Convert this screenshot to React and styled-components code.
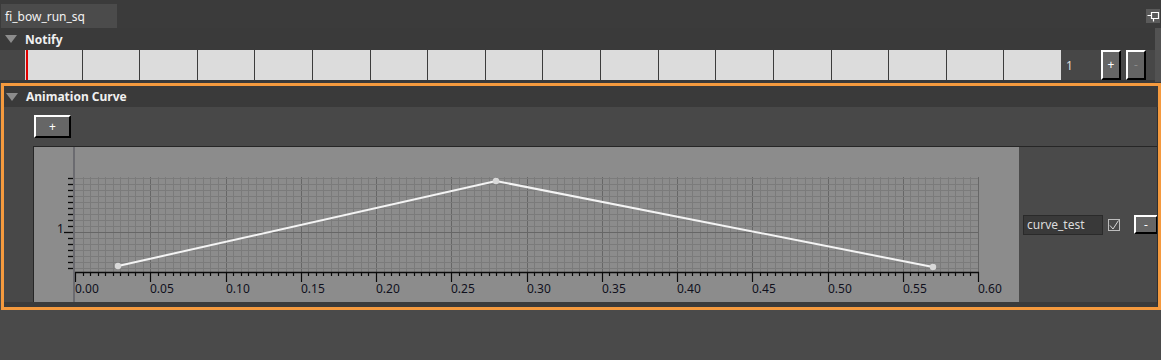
import React from 'react';
import styled, { createGlobalStyle } from 'styled-components';

const GlobalStyle = createGlobalStyle`
    body {
        margin:0;
        background:#4a4a4a;
        font-family:"Noto Sans", "Open Sans", sans-serif;
        font-size:12px;
        color:#e8e8e8;
    }
`

const Page = styled.div`
    width:1161px;
    height:360px;
    overflow:hidden;
    background:#4a4a4a;
`
const TabBar = styled.div`
    height:28px;
    display:flex;
    justify-content:space-between;
    background:#3b3b3b;
`
const Tab = styled.div`
    height:24px;
    margin:4px 0 0 1px;
    padding:0 32px 0 4px;
    display:flex;
    align-items:center;
    background:#4b4b4b;
    color:#f2f2f2;
`
const PinButton = styled.div`
    width:14px;
    height:14px;
    margin:9px 1px 0 0;
    background:#5a5a5a;
    display:flex;
    align-items:center;
    justify-content:center;
`
const NotifySection = styled.div`
    display:flex;
    background:#3a3a3a;
`
const NotifyMain = styled.div`
    flex:1;
    padding-bottom:3px;
`
const ScrollStrip = styled.div`
    width:6px;
    margin-bottom:1px;
    background:#525252;
`
const SectionHeader = styled.div`
    height:${p => p.h}px;
    display:flex;
    align-items:center;
    gap:8px;
    padding-left:${p => p.indent}px;
    background:#3a3a3a;
    font-weight:bold;
    color:#f0f0f0;
`
const Arrow = styled.span`
    width:0;
    height:0;
    border-left:6px solid transparent;
    border-right:6px solid transparent;
    border-top:8px solid #8c8c8c;
`
const NotifyRow = styled.div`
    height:30px;
    display:flex;
    align-items:stretch;
    background:#474747;
`
const Track = styled.div`
    position:relative;
    width:1036px;
    margin-left:25px;
    display:flex;
    background:#dcdcdc;
`
const Playhead = styled.div`
    position:absolute;
    left:1px;
    top:0;
    bottom:0;
    width:2px;
    background:#e00000;
`
const Cell = styled.div`
    flex:1;
    border-left:${p => (p.first ? 'none' : '1px solid #3c3c3c')};
`
const Count = styled.div`
    width:40px;
    padding-left:5px;
    box-sizing:border-box;
    display:flex;
    align-items:center;
    color:#dedede;
`
const BevelButton = styled.button`
    width:${p => p.w}px;
    height:${p => p.h}px;
    padding:0;
    margin-left:${p => p.ml || 0}px;
    flex-shrink:0;
    border-style:solid;
    border-width:2px;
    border-color:#ffffff #000000 #000000 #ffffff;
    background:${p => (p.disabled ? '#646464' : '#666666')};
    color:${p => (p.disabled ? '#8a8a8a' : '#ffffff')};
    font-family:"Noto Sans", sans-serif;
    font-size:12px;
    line-height:1;
`
const CurveBox = styled.div`
    margin-left:1px;
    border:3px solid #f59a3e;
    background:#4a4a4a;
`
const CurveContent = styled.div`
    padding:8px 0 0 29px;
    background:#484848;
    border-bottom:5px solid #3b3b3b;
    border-right:1px solid #303030;
`
const Toolbar = styled.div`
    height:23px;
    margin-bottom:8px;
    padding-left:1px;
`
const ChartRow = styled.div`
    height:155px;
    display:flex;
    border-top:1px solid #262626;
    border-left:1px solid #262626;
    overflow:hidden;
`
const ChartPanel = styled.div`
    width:985px;
    height:155px;
    background:#8c8c8c;
    flex-shrink:0;
`
const SidePanel = styled.div`
    flex:1;
    display:flex;
    align-items:center;
    padding-left:4px;
    background:#4a4a4a;
    white-space:nowrap;
`
const NameField = styled.div`
    width:80px;
    height:20px;
    box-sizing:border-box;
    padding-left:3px;
    display:flex;
    align-items:center;
    background:#393939;
    border:1px solid #2a2a2a;
    color:#dcdcdc;
    flex-shrink:0;
`
const Check = styled.span`
    width:12px;
    height:12px;
    margin-left:5px;
    box-sizing:border-box;
    border:1px solid #bdbdbd;
    display:flex;
    align-items:center;
    justify-content:center;
    flex-shrink:0;
`

const W = 985;
const GX0 = 41;
const GX1 = 944;
const STEP = (GX1 - GX0) / 120;
const TOP = 30;
const AXIS = 125;

const Chart = () => {
    const vLines = [];
    const xTicks = [];
    const labels = [];
    for (let i = 0; i <= 120; i++) {
        const x = Math.round(GX0 + i * STEP) + 0.5;
        const major = i % 10 === 0;
        if (i > 0) {
            vLines.push(<line key={'v' + i} x1={x} x2={x} y1={TOP} y2={AXIS} stroke={major ? '#676767' : '#7b7b7b'} strokeWidth="1" />);
        }
        xTicks.push(<line key={'t' + i} x1={x} x2={x} y1={AXIS} y2={AXIS + (major ? 10 : 4)} stroke="#0a0a0a" strokeWidth="1.2" />);
        if (major) {
            labels.push(<text key={'l' + i} x={x - 0.5} y={146} fontSize="12" fill="#10101c" fontFamily="Noto Sans, sans-serif">{(i / 200).toFixed(2)}</text>);
        }
    }
    const hLines = [];
    const yTicks = [];
    for (let k = 0; k <= 15; k++) {
        const y = 31 + k * 6 + 0.5;
        const major = k === 9;
        hLines.push(<line key={'h' + k} x1={GX0} x2={GX1} y1={y} y2={y} stroke={major ? '#676767' : '#7b7b7b'} strokeWidth="1" />);
        yTicks.push(<line key={'y' + k} x1={major ? 30 : 34} x2={39} y1={y} y2={y} stroke="#0a0a0a" strokeWidth="1.3" />);
    }
    const pts = [[84, 119], [462, 34], [899, 120]];
    return (
        <svg width={W} height="155" viewBox={`0 0 ${W} 155`}>
            {vLines}
            {hLines}
            <rect x="39" y="0" width="2" height="155" fill="#6b6b70" />
            {yTicks}
            <text x="23" y="86" fontSize="12" fill="#10101c" fontFamily="Noto Sans, sans-serif">1</text>
            <line x1={GX0} x2={GX1 + 1} y1={AXIS + 0.5} y2={AXIS + 0.5} stroke="#0a0a0a" strokeWidth="1.5" />
            {xTicks}
            {labels}
            <polyline points={pts.map(p => p.join(',')).join(' ')} fill="none" stroke="#f4f4f4" strokeWidth="2" />
            {pts.map((p, i) => <circle key={i} cx={p[0]} cy={p[1]} r="3.2" fill="#d9d9d9" />)}
        </svg>
    );
};

const cells = Array.from({ length: 18 }, (_, i) => i);

const App = () => {
    return (
        <Page>
            <GlobalStyle />
            <TabBar>
                <Tab>fi_bow_run_sq</Tab>
                <PinButton>
                    <svg width="14" height="14" viewBox="0 0 14 14">
                        <path d="M1.5 6.5H5.5M5.5 3.5H12.5V9.5H5.5ZM7.5 9.5V12.5" fill="none" stroke="#ffffff" strokeWidth="1.2" />
                    </svg>
                </PinButton>
            </TabBar>
            <NotifySection>
                <NotifyMain>
                    <SectionHeader h={22} indent={5}><Arrow />Notify</SectionHeader>
                    <NotifyRow>
                        <Track>
                            {cells.map(i => <Cell key={i} first={i === 0} />)}
                            <Playhead />
                        </Track>
                        <Count>1</Count>
                        <BevelButton w={20} h={30}>+</BevelButton>
                        <BevelButton w={20} h={30} ml={5} disabled>-</BevelButton>
                    </NotifyRow>
                </NotifyMain>
                <ScrollStrip />
            </NotifySection>
            <CurveBox>
                <SectionHeader h={21} indent={2}><Arrow />Animation Curve</SectionHeader>
                <CurveContent>
                    <Toolbar>
                        <BevelButton w={37} h={23}>+</BevelButton>
                    </Toolbar>
                    <ChartRow>
                        <ChartPanel><Chart /></ChartPanel>
                        <SidePanel>
                            <NameField>curve_test</NameField>
                            <Check>
                                <svg width="10" height="10" viewBox="0 0 10 10">
                                    <path d="M1 5.5L4 9L9.5 0.5" fill="none" stroke="#d8d8d8" strokeWidth="1" />
                                </svg>
                            </Check>
                            <BevelButton w={24} h={19} ml={14}>-</BevelButton>
                        </SidePanel>
                    </ChartRow>
                </CurveContent>
            </CurveBox>
        </Page>
    );
};

export default App;
